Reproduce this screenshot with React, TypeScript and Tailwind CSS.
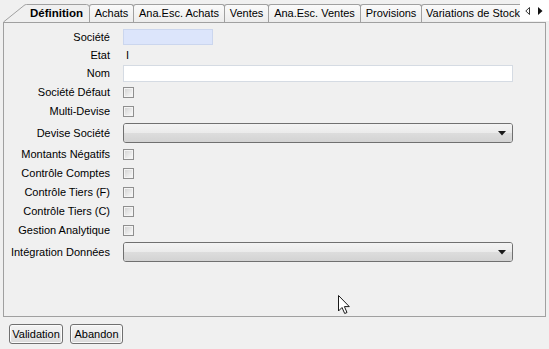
import React from 'react';

// ===== petits contrôles façon Windows =====
function CheckBox() {
  return (
    <div className="w-[11px] h-[11px] border border-[#8f8f8f] bg-[#f4f4f4] p-[1px]">
      <div className="w-full h-full bg-gradient-to-br from-[#d6d6d6] to-[#f7f7f7]" />
    </div>
  );
}

function Combo() {
  return (
    <div className="relative w-[390px] h-[20px] rounded-[3px] border border-[#707070] overflow-hidden">
      <div className="h-1/2 bg-gradient-to-b from-[#f3f3f3] to-[#ebebeb]" />
      <div className="h-1/2 bg-gradient-to-b from-[#dddddd] to-[#d3d3d3]" />
      <svg className="absolute right-[6px] top-[7px]" width="8" height="5" viewBox="0 0 8 5">
        <path d="M0 0 L8 0 L4 4.5 Z" fill="#1a1a1a" />
      </svg>
    </div>
  );
}

function WinButton({ label, w }: any) {
  return (
    <div
      className={`${w} h-[20px] rounded-[3px] border border-[#707070] bg-gradient-to-b from-[#f4f4f4] via-[#ebebeb] to-[#d8d8d8] flex items-center justify-center text-black shadow-[inset_0_0_0_1px_#fbfbfb]`}
    >
      {label}
    </div>
  );
}

const tabs = [
  { label: 'Achats', w: 'w-[45px]' },
  { label: 'Ana.Esc. Achats', w: 'w-[92px]' },
  { label: 'Ventes', w: 'w-[45px]' },
  { label: 'Ana.Esc. Ventes', w: 'w-[93px]' },
  { label: 'Provisions', w: 'w-[62px]' },
  { label: 'Variations de Stock', w: 'w-[104px]' },
];

const rows: any[] = [
  { label: 'Société', h: 'h-[18px]', kind: 'societe' },
  { label: 'Etat', h: 'h-[18px]', kind: 'etat' },
  { label: 'Nom', h: 'h-[19px]', kind: 'nom' },
  { label: 'Société Défaut', h: 'h-[19px]', kind: 'check' },
  { label: 'Multi-Devise', h: 'h-[19px]', kind: 'check' },
  { label: 'Devise Société', h: 'h-[24px]', kind: 'combo' },
  { label: 'Montants Négatifs', h: 'h-[19px]', kind: 'check' },
  { label: 'Contrôle Comptes', h: 'h-[19px]', kind: 'check' },
  { label: 'Contrôle Tiers (F)', h: 'h-[19px]', kind: 'check' },
  { label: 'Contrôle Tiers (C)', h: 'h-[19px]', kind: 'check' },
  { label: 'Gestion Analytique', h: 'h-[19px]', kind: 'check' },
  { label: 'Intégration Données', h: 'h-[24px]', kind: 'combo' },
];

function Control({ kind }: any) {
  switch (kind) {
    case 'societe':
      return <div className="w-[90px] h-[16px] border border-[#cbd6ee] bg-[#dce5fb]" />;
    case 'etat':
      return <span className="pl-[3px]">I</span>;
    case 'nom':
      return <div className="w-[390px] h-[17px] border border-[#d5dbe3] bg-white" />;
    case 'check':
      return <CheckBox />;
    case 'combo':
      return <Combo />;
    default:
      return null;
  }
}

export default function App() {
  return (
    <div className="relative w-[549px] h-[349px] bg-[#f0f0f0] overflow-hidden font-['Liberation_Sans',Arial,sans-serif] text-[11px] text-black leading-none">
      {/* barre d'onglets */}
      <div className="flex h-[22px]">
        <div className="w-[520px] pt-[4px] pl-[3px] flex items-end overflow-hidden relative z-10">
          {/* onglet actif avec bord biseauté */}
          <div className="relative w-[87px] h-[19px] -mb-[1px] shrink-0">
            <svg className="absolute inset-0" width="87" height="19" viewBox="0 0 87 19">
              <path
                d="M0.5 19 L0.5 18 L21 1.5 Q22 0.5 23.5 0.5 L83.5 0.5 Q86.5 0.5 86.5 3.5 L86.5 19 Z"
                fill="#f0f0f0"
                stroke="#a0a0a0"
              />
              <rect x="1" y="18" width="85" height="1" fill="#f0f0f0" />
            </svg>
            <span className="absolute left-[27px] top-[4px] font-bold text-[11.5px]">Définition</span>
          </div>
          {tabs.map((tab) => (
            <div
              key={tab.label}
              className={`${tab.w} h-[18px] shrink-0 -ml-px border-t border-l border-r border-[#a0a0a0] rounded-t-[3px] bg-gradient-to-b from-[#fafafa] to-[#ececec] flex items-center justify-center whitespace-nowrap`}
            >
              {tab.label}
            </div>
          ))}
        </div>
        <div className="w-[29px] h-[21px] bg-white flex items-center gap-[8px] pl-[5px]">
          <svg width="5" height="8" viewBox="0 0 5 8">
            <path d="M4.5 0.5 L4.5 7.5 L0.8 4 Z" fill="none" stroke="#222" strokeWidth="0.9" />
          </svg>
          <svg width="5" height="8" viewBox="0 0 5 8">
            <path d="M0 0 L0 8 L4.5 4 Z" fill="#111" />
          </svg>
        </div>
      </div>

      {/* panneau */}
      <div className="ml-[3px] w-[543px] h-[295px] border border-[#a0a0a0] pt-[5px]">
        {rows.map((row) => (
          <div key={row.label} className={`flex items-center ${row.h}`}>
            <div className="w-[106px] text-right whitespace-nowrap">{row.label}</div>
            <div className="ml-[13px] flex items-center">
              <Control kind={row.kind} />
            </div>
          </div>
        ))}
      </div>

      {/* boutons */}
      <div className="flex gap-[7px] pl-[9px] pt-[7px]">
        <WinButton label="Validation" w="w-[54px]" />
        <WinButton label="Abandon" w="w-[53px]" />
      </div>

      {/* curseur souris */}
      <svg className="absolute left-[338px] top-[295px]" width="13" height="20" viewBox="0 0 13 20">
        <path
          d="M0.5 0.5 L0.5 16 L4 12.5 L6.7 18.5 L9 17.5 L6.4 11.6 L11.3 11.6 Z"
          fill="white"
          stroke="#1a1a1a"
          strokeWidth="1"
          strokeLinejoin="miter"
        />
      </svg>
    </div>
  );
}
